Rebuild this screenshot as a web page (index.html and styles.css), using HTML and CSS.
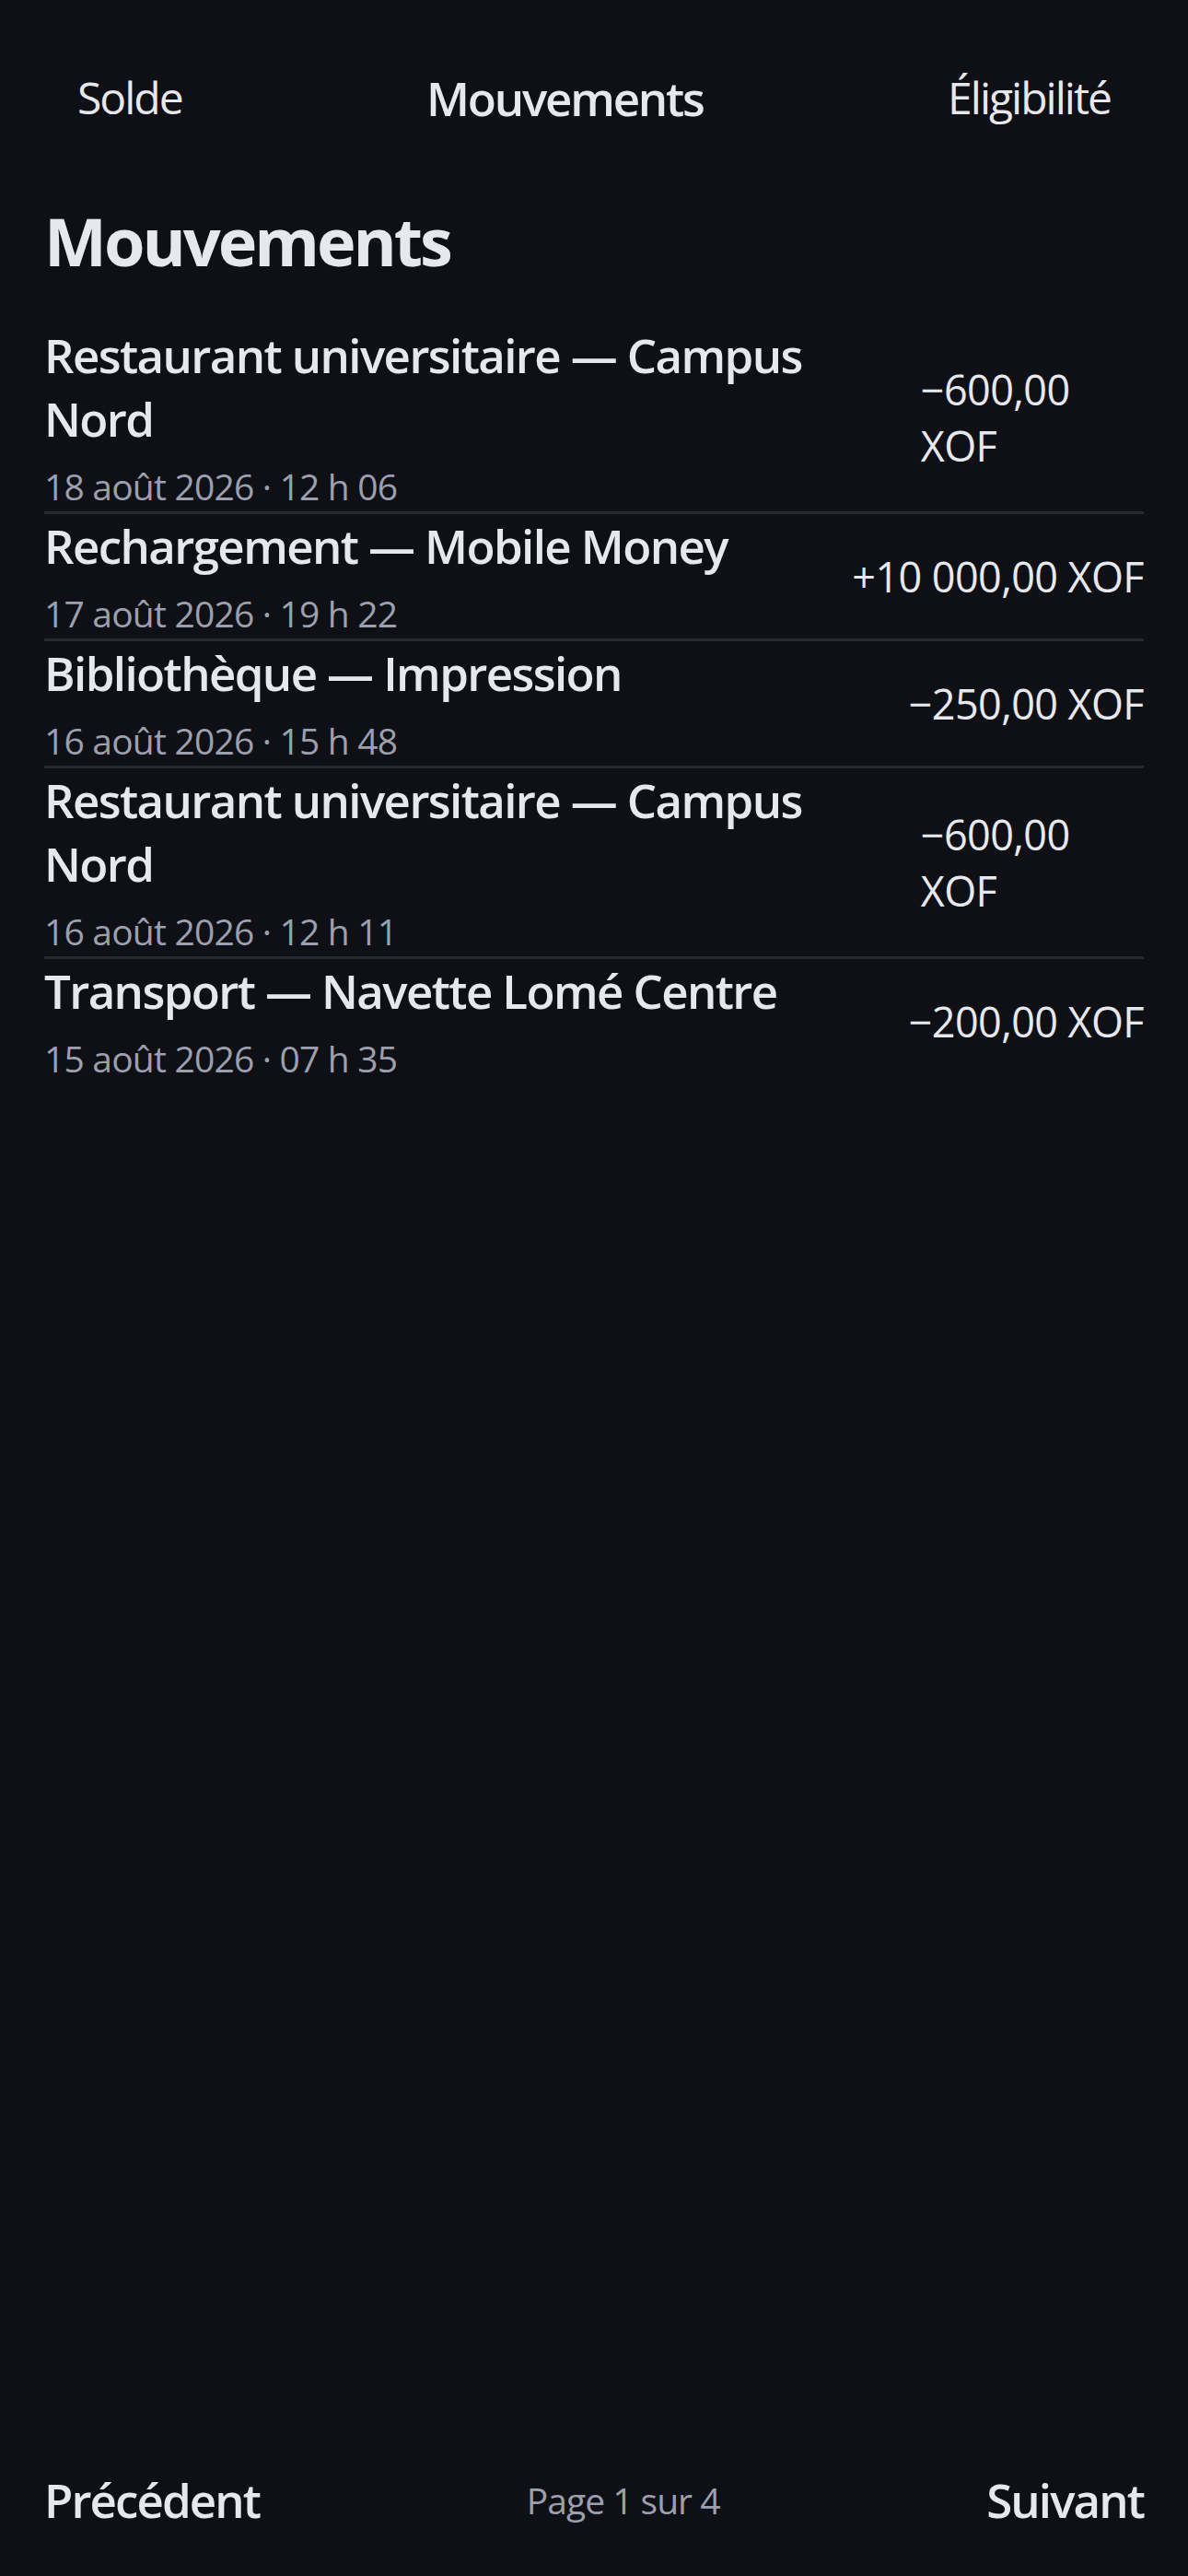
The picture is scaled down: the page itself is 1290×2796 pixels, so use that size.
FILE: index.html
```html
<!DOCTYPE html>
<html lang="fr">
<head>
<meta charset="utf-8">
<title>Mouvements</title>
<link rel="stylesheet" href="styles.css">
</head>
<body>
<div class="app">
  <nav class="tabs">
    <a class="tab" href="#">Solde</a>
    <a class="tab tab--active" href="#">Mouvements</a>
    <a class="tab" href="#">Éligibilité</a>
  </nav>
  <main class="content">
    <h1 class="page-title">Mouvements</h1>
    <ul class="tx-list">
      <li class="tx">
        <div class="tx-info">
          <div class="tx-label">Restaurant universitaire — Campus Nord</div>
          <div class="tx-date">18 août 2026 · 12 h 06</div>
        </div>
        <div class="tx-amount">−600,00 XOF</div>
      </li>
      <li class="tx">
        <div class="tx-info">
          <div class="tx-label">Rechargement — Mobile Money</div>
          <div class="tx-date">17 août 2026 · 19 h 22</div>
        </div>
        <div class="tx-amount">+10 000,00 XOF</div>
      </li>
      <li class="tx">
        <div class="tx-info">
          <div class="tx-label">Bibliothèque — Impression</div>
          <div class="tx-date">16 août 2026 · 15 h 48</div>
        </div>
        <div class="tx-amount">−250,00 XOF</div>
      </li>
      <li class="tx">
        <div class="tx-info">
          <div class="tx-label">Restaurant universitaire — Campus Nord</div>
          <div class="tx-date">16 août 2026 · 12 h 11</div>
        </div>
        <div class="tx-amount">−600,00 XOF</div>
      </li>
      <li class="tx">
        <div class="tx-info">
          <div class="tx-label">Transport — Navette Lomé Centre</div>
          <div class="tx-date">15 août 2026 · 07 h 35</div>
        </div>
        <div class="tx-amount">−200,00 XOF</div>
      </li>
    </ul>
  </main>
  <footer class="pager">
    <a class="pager-btn" href="#">Précédent</a>
    <span class="pager-info">Page 1 sur 4</span>
    <a class="pager-btn" href="#">Suivant</a>
  </footer>
</div>
</body>
</html>
```
FILE: styles.css
```css
* { box-sizing: border-box; }

html, body {
  margin: 0;
  padding: 0;
  background: #0f1015;
}

body {
  font-family: "Open Sans", "Noto Sans", sans-serif;
  color: #e7e8ee;
}

a { color: inherit; text-decoration: none; }

.app {
  min-height: 2796px;
  display: flex;
  flex-direction: column;
}

.tabs {
  display: flex;
  justify-content: space-between;
  align-items: center;
  padding: 74px 84px 0;
  height: 138px;
}

.tab {
  font-size: 48px;
  line-height: 64px;
  font-weight: 400;
  letter-spacing: -2px;
}

.tab--active {
  font-size: 51px;
  font-weight: 600;
  letter-spacing: -2.2px;
}

.content {
  flex: 1;
  padding: 0 48px;
}

.page-title {
  margin: 80px 0 47px;
  font-size: 72px;
  line-height: 86px;
  font-weight: 700;
  letter-spacing: -3px;
}

.tx-list {
  list-style: none;
  margin: 0;
  padding: 0;
}

.tx {
  display: flex;
  justify-content: space-between;
  align-items: center;
  gap: 48px;
  padding: 0 0 1px;
  border-bottom: 3px solid #272830;
}

.tx:last-child { border-bottom: 0; }

.tx-label {
  font-size: 51px;
  line-height: 69px;
  font-weight: 600;
  letter-spacing: -1.6px;
}

.tx-date {
  margin-top: 13px;
  font-size: 39px;
  line-height: 52px;
  color: #9c9fad;
  letter-spacing: -0.8px;
}

.tx-amount {
  font-size: 45px;
  line-height: 61px;
  letter-spacing: -0.6px;
}

.pager {
  display: flex;
  justify-content: space-between;
  align-items: center;
  padding: 0 48px 48px;
}

.pager-btn {
  font-size: 51px;
  line-height: 69px;
  font-weight: 600;
  letter-spacing: -1.9px;
}

.pager-info {
  font-size: 39px;
  line-height: 52px;
  color: #9c9fad;
  letter-spacing: -1px;
}
```
